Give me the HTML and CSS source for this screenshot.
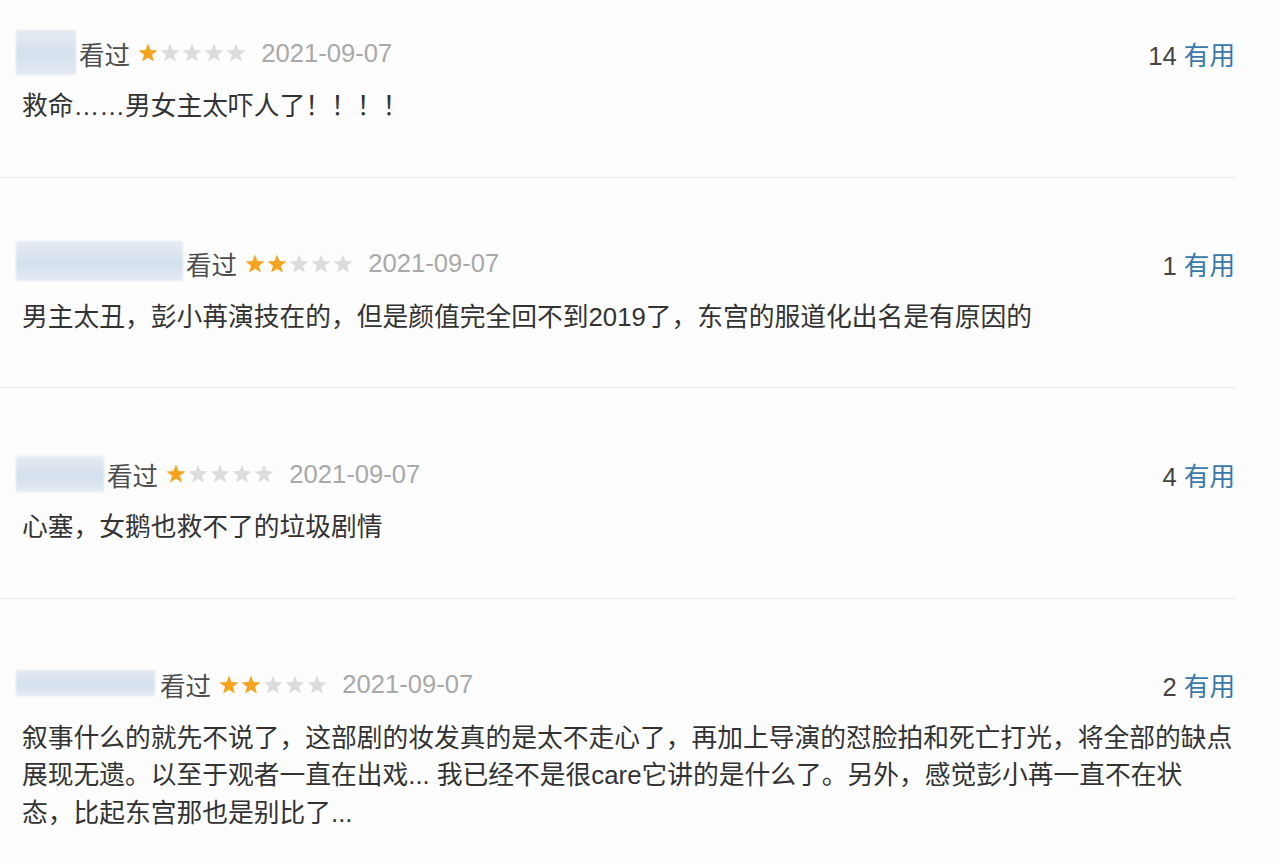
FILE: index.html
```html
<!DOCTYPE html>
<html lang="zh-CN">
<head>
  <meta charset="UTF-8" />
  <meta name="viewport" content="width=device-width, initial-scale=1.0" />
  <title>短评</title>
  <link rel="stylesheet" href="styles.css">
</head>
<body>

  <div class="comments">

    <div class="review first">
      <div class="review-head">
        <span class="avatar-blur w1"></span>
        <span class="watched">看过</span>
        <svg class="stars" viewBox="0 0 108 20" width="108" height="20">
          <polygon class="on" points="10,0.5 12.5,7.1 19.5,7.4 14,11.8 15.9,18.6 10,14.7 4.1,18.6 6,11.8 0.5,7.4 7.5,7.1"/>
          <polygon class="off" transform="translate(22 0)" points="10,0.5 12.5,7.1 19.5,7.4 14,11.8 15.9,18.6 10,14.7 4.1,18.6 6,11.8 0.5,7.4 7.5,7.1"/>
          <polygon class="off" transform="translate(44 0)" points="10,0.5 12.5,7.1 19.5,7.4 14,11.8 15.9,18.6 10,14.7 4.1,18.6 6,11.8 0.5,7.4 7.5,7.1"/>
          <polygon class="off" transform="translate(66 0)" points="10,0.5 12.5,7.1 19.5,7.4 14,11.8 15.9,18.6 10,14.7 4.1,18.6 6,11.8 0.5,7.4 7.5,7.1"/>
          <polygon class="off" transform="translate(88 0)" points="10,0.5 12.5,7.1 19.5,7.4 14,11.8 15.9,18.6 10,14.7 4.1,18.6 6,11.8 0.5,7.4 7.5,7.1"/>
        </svg>
        <span class="date">2021-09-07</span>
        <span class="votes">14 <a href="#">有用</a></span>
      </div>
      <p class="review-text">救命……男女主太吓人了！！！！</p>
    </div>

    <div class="review">
      <div class="review-head">
        <span class="avatar-blur w2"></span>
        <span class="watched">看过</span>
        <svg class="stars" viewBox="0 0 108 20" width="108" height="20">
          <polygon class="on" points="10,0.5 12.5,7.1 19.5,7.4 14,11.8 15.9,18.6 10,14.7 4.1,18.6 6,11.8 0.5,7.4 7.5,7.1"/>
          <polygon class="on" transform="translate(22 0)" points="10,0.5 12.5,7.1 19.5,7.4 14,11.8 15.9,18.6 10,14.7 4.1,18.6 6,11.8 0.5,7.4 7.5,7.1"/>
          <polygon class="off" transform="translate(44 0)" points="10,0.5 12.5,7.1 19.5,7.4 14,11.8 15.9,18.6 10,14.7 4.1,18.6 6,11.8 0.5,7.4 7.5,7.1"/>
          <polygon class="off" transform="translate(66 0)" points="10,0.5 12.5,7.1 19.5,7.4 14,11.8 15.9,18.6 10,14.7 4.1,18.6 6,11.8 0.5,7.4 7.5,7.1"/>
          <polygon class="off" transform="translate(88 0)" points="10,0.5 12.5,7.1 19.5,7.4 14,11.8 15.9,18.6 10,14.7 4.1,18.6 6,11.8 0.5,7.4 7.5,7.1"/>
        </svg>
        <span class="date">2021-09-07</span>
        <span class="votes">1 <a href="#">有用</a></span>
      </div>
      <p class="review-text">男主太丑，彭小苒演技在的，但是颜值完全回不到2019了，东宫的服道化出名是有原因的</p>
    </div>

    <div class="review">
      <div class="review-head">
        <span class="avatar-blur w3"></span>
        <span class="watched">看过</span>
        <svg class="stars" viewBox="0 0 108 20" width="108" height="20">
          <polygon class="on" points="10,0.5 12.5,7.1 19.5,7.4 14,11.8 15.9,18.6 10,14.7 4.1,18.6 6,11.8 0.5,7.4 7.5,7.1"/>
          <polygon class="off" transform="translate(22 0)" points="10,0.5 12.5,7.1 19.5,7.4 14,11.8 15.9,18.6 10,14.7 4.1,18.6 6,11.8 0.5,7.4 7.5,7.1"/>
          <polygon class="off" transform="translate(44 0)" points="10,0.5 12.5,7.1 19.5,7.4 14,11.8 15.9,18.6 10,14.7 4.1,18.6 6,11.8 0.5,7.4 7.5,7.1"/>
          <polygon class="off" transform="translate(66 0)" points="10,0.5 12.5,7.1 19.5,7.4 14,11.8 15.9,18.6 10,14.7 4.1,18.6 6,11.8 0.5,7.4 7.5,7.1"/>
          <polygon class="off" transform="translate(88 0)" points="10,0.5 12.5,7.1 19.5,7.4 14,11.8 15.9,18.6 10,14.7 4.1,18.6 6,11.8 0.5,7.4 7.5,7.1"/>
        </svg>
        <span class="date">2021-09-07</span>
        <span class="votes">4 <a href="#">有用</a></span>
      </div>
      <p class="review-text">心塞，女鹅也救不了的垃圾剧情</p>
    </div>

    <div class="review last">
      <div class="review-head">
        <span class="avatar-blur w4"></span>
        <span class="watched">看过</span>
        <svg class="stars" viewBox="0 0 108 20" width="108" height="20">
          <polygon class="on" points="10,0.5 12.5,7.1 19.5,7.4 14,11.8 15.9,18.6 10,14.7 4.1,18.6 6,11.8 0.5,7.4 7.5,7.1"/>
          <polygon class="on" transform="translate(22 0)" points="10,0.5 12.5,7.1 19.5,7.4 14,11.8 15.9,18.6 10,14.7 4.1,18.6 6,11.8 0.5,7.4 7.5,7.1"/>
          <polygon class="off" transform="translate(44 0)" points="10,0.5 12.5,7.1 19.5,7.4 14,11.8 15.9,18.6 10,14.7 4.1,18.6 6,11.8 0.5,7.4 7.5,7.1"/>
          <polygon class="off" transform="translate(66 0)" points="10,0.5 12.5,7.1 19.5,7.4 14,11.8 15.9,18.6 10,14.7 4.1,18.6 6,11.8 0.5,7.4 7.5,7.1"/>
          <polygon class="off" transform="translate(88 0)" points="10,0.5 12.5,7.1 19.5,7.4 14,11.8 15.9,18.6 10,14.7 4.1,18.6 6,11.8 0.5,7.4 7.5,7.1"/>
        </svg>
        <span class="date">2021-09-07</span>
        <span class="votes">2 <a href="#">有用</a></span>
      </div>
      <p class="review-text">叙事什么的就先不说了，这部剧的妆发真的是太不走心了，再加上导演的怼脸拍和死亡打光，将全部的缺点展现无遗。以至于观者一直在出戏... 我已经不是很care它讲的是什么了。另外，感觉彭小苒一直不在状<br>态，比起东宫那也是别比了...</p>
    </div>

  </div>

</body>
</html>
```

FILE: styles.css
```css
body {
  margin: 0;
  background: #fdfdfd;
  font-family: "Liberation Sans", "Noto Sans CJK SC", sans-serif;
  color: #333;
}
.comments {
  width: 1236px;
}
.review {
  padding: 66px 1px 51px 22px;
  border-bottom: 1px solid #e7e8ed;
}
.review.first {
  padding-top: 33px;
}
.review.last {
  border-bottom: none;
}
.review-head {
  display: flex;
  align-items: center;
  height: 40px;
  font-size: 25.6px;
  margin-left: -6px;
}
.avatar-blur {
  display: block;
  margin-right: 3px;
  background: linear-gradient(#e6ebf2, #d3e0ee 55%, #e4ebf3);
  filter: blur(1px);
}
.avatar-blur.w1 {
  width: 60px;
  height: 45px;
  margin-top: -2px;
}
.avatar-blur.w2 {
  width: 167px;
  height: 40px;
  margin-top: -6px;
}
.avatar-blur.w3 {
  width: 88px;
  height: 36px;
}
.avatar-blur.w4 {
  width: 139px;
  height: 26px;
  margin-top: -4px;
  margin-right: 5px;
}
.watched {
  color: #4d4d4d;
}
.stars {
  margin-left: 8px;
}
.stars .on {
  fill: #f6a31f;
}
.stars .off {
  fill: #dcdcdc;
}
.date {
  margin-left: 15px;
  color: #a9a9a9;
}
.votes {
  margin-left: auto;
  color: #444;
}
.votes a {
  color: #3b78aa;
  text-decoration: none;
}
.review-text {
  margin: 15px 0 0;
  font-size: 25.75px;
  line-height: 37.5px;
  color: #333;
}
```
